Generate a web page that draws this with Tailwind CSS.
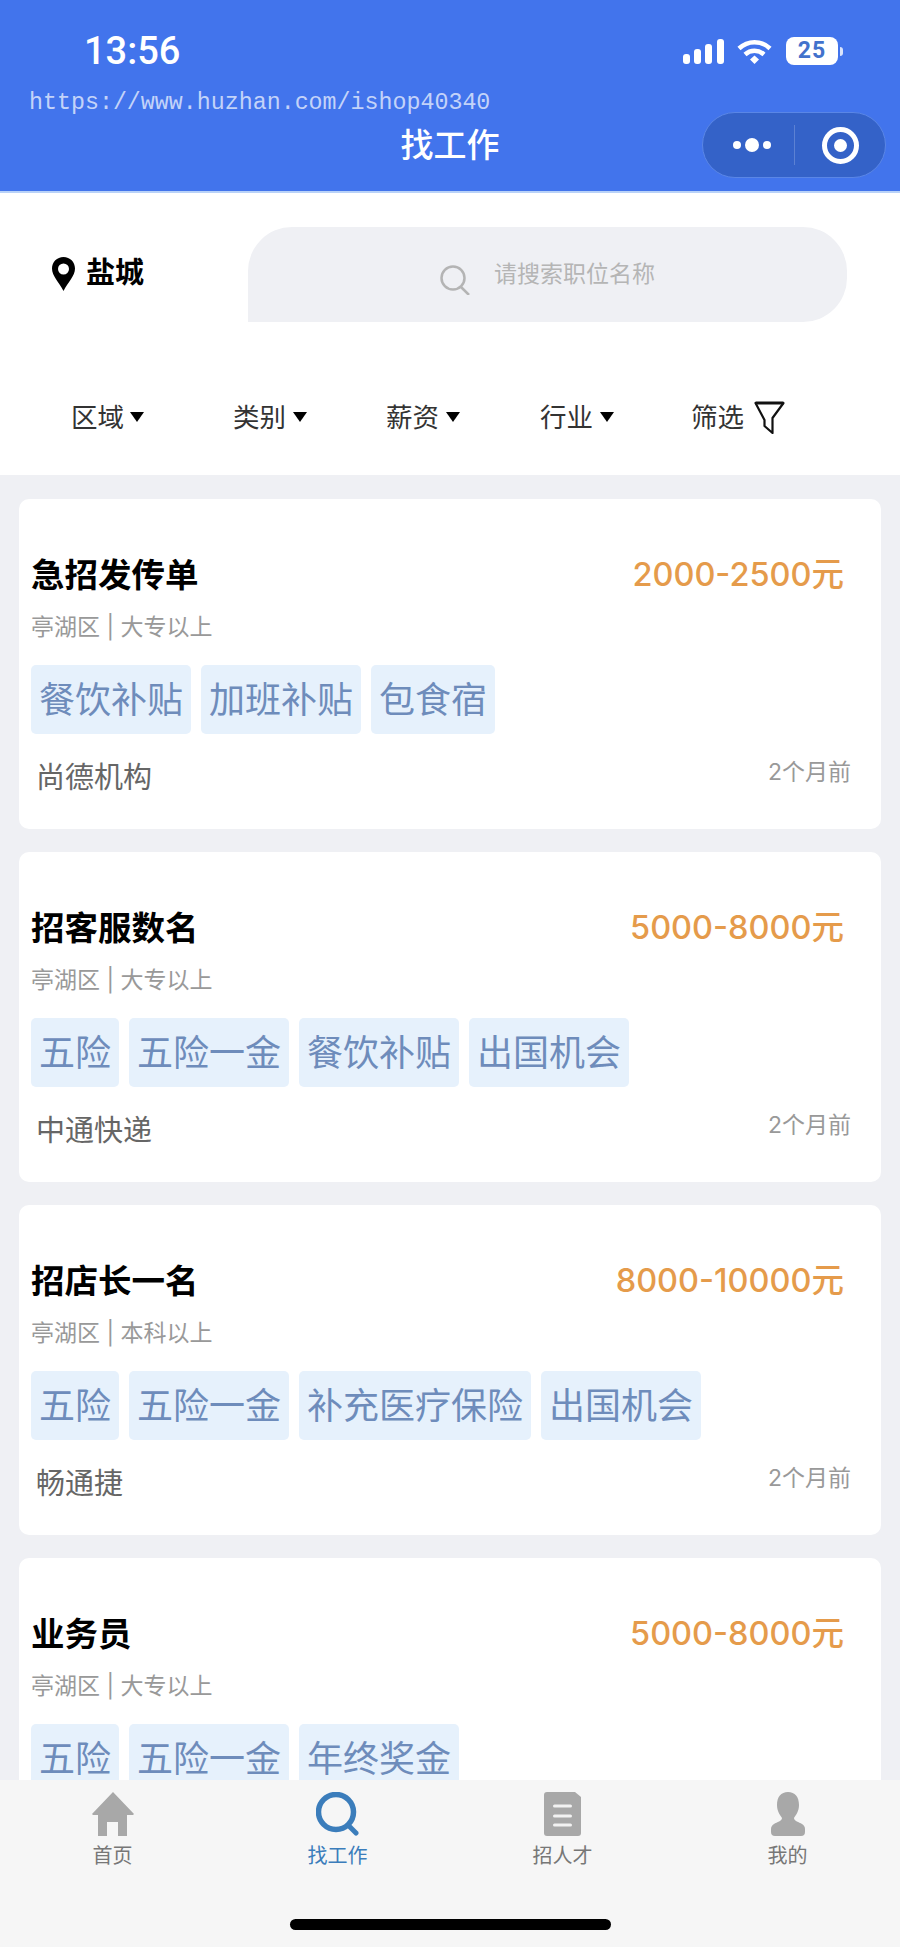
<!DOCTYPE html>
<html lang="zh-CN">
<head>
    <meta charset="UTF-8">
    <meta name="viewport" content="width=device-width, initial-scale=1.0">
    <script src="https://cdn.jsdelivr.net/npm/@tailwindcss/browser@4"></script>
    <title>找工作</title>
</head>
<body class="bg-[#eff0f4] font-['Inter','Noto_Sans_CJK_SC',sans-serif]">
<div class="relative w-[900px] h-[1947px] overflow-hidden flex flex-col">

    <!-- header -->
    <header class="relative h-[193px] shrink-0 bg-[#4274ec] border-b-2 border-[#b9d2f8] text-white">
        <div class="flex items-center justify-between pl-[84px] pr-[57px] pt-[28px]">
            <span class="font-['Roboto'] text-[38px] leading-[46px] font-medium">13:56</span>
            <div class="flex items-center">
                <svg width="41" height="25" viewBox="0 0 41 25" fill="#fff">
                    <rect x="0" y="15" width="7" height="10" rx="3"/>
                    <rect x="11" y="10" width="7" height="15" rx="3"/>
                    <rect x="22" y="5" width="7" height="20" rx="3"/>
                    <rect x="34" y="0" width="7" height="25" rx="3"/>
                </svg>
                <svg class="ml-[13px]" width="35" height="25" viewBox="0 0 35 25" fill="none" stroke="#fff" stroke-width="4.5">
                    <path d="M2 9.500C11 1 24 1 33 9.500"/>
                    <path d="M8 15.500C13.500 10.500 21.500 10.500 27 15.500"/>
                    <path d="M13 20.500L17.500 16.500L22 20.500L17.500 25Z" fill="#fff" stroke="none"/>
                </svg>
                <div class="ml-[14px] w-[52px] h-[28px] rounded-[8px] bg-white text-[#4272cc] font-['Roboto'] font-bold text-[23px] leading-[28px] text-center tracking-[1px]">25</div>
                <div class="ml-[2px] w-[3px] h-[9px] rounded-r-full bg-white/80"></div>
            </div>
        </div>
        <div class="absolute left-[29px] top-[90px] font-['Liberation_Mono'] text-[23.300px] leading-[27px] text-white/70">https://www.huzhan.com/ishop40340</div>
        <h1 class="absolute left-0 right-0 top-[122px] text-center text-[33px] leading-[46px] font-medium">找工作</h1>
        <div class="absolute left-[702px] top-[112px] w-[184px] h-[66px] rounded-full bg-[#3462c8] border border-[#5a86e6] flex items-center">
            <div class="w-[91px] flex justify-center items-center gap-[4px] pl-[6px]">
                <span class="w-[8px] h-[8px] rounded-full bg-white"></span>
                <span class="w-[14px] h-[14px] rounded-full bg-white"></span>
                <span class="w-[8px] h-[8px] rounded-full bg-white"></span>
            </div>
            <div class="w-px h-[40px] bg-white/20"></div>
            <div class="flex-1 flex justify-center">
                <div class="w-[37px] h-[37px] rounded-full border-[5px] border-white flex items-center justify-center">
                    <span class="w-[13px] h-[13px] rounded-full bg-white"></span>
                </div>
            </div>
        </div>
    </header>

    <!-- search + filters -->
    <section class="h-[282px] shrink-0 bg-white pt-[34px]">
        <div class="flex">
            <div class="w-[248px] pl-[52px] pt-[30px] flex items-start">
                <svg width="23" height="34" viewBox="0 0 23 34">
                    <path fill-rule="evenodd" d="M11.500 0C5 0 0 5 0 11.500C0 19 7 25 11.500 34C16 25 23 19 23 11.500C23 5 18 0 11.500 0ZM11.500 6.500A5.500 5.500 0 1 1 11.500 17.500A5.500 5.500 0 1 1 11.500 6.500Z"/>
                </svg>
                <span class="ml-[11px] mt-[1px] text-[29px] leading-[30px] font-bold text-black">盐城</span>
            </div>
            <div class="w-[599px] h-[95px] bg-[#eff0f4] rounded-tl-[44px] rounded-tr-[44px] rounded-br-[44px] flex pl-[192px] pt-[34px]">
                <svg class="mt-[4px]" width="30" height="30" viewBox="0 0 30 30" fill="none" stroke="#b4b4b4" stroke-width="2.500">
                    <circle cx="13" cy="13" r="11.500"/>
                    <path d="M21 22L29 30"/>
                </svg>
                <span class="ml-[24px] text-[23px] leading-[26px] text-[#b5b5b5]">请搜索职位名称</span>
            </div>
        </div>
        <div class="flex items-center mt-[77px] pl-[71px] text-[26.500px] leading-[36px] text-[#333]">
            <span>区域</span>
            <span class="ml-[6px] w-0 h-0 border-x-[7px] border-x-transparent border-t-[10px] border-t-black"></span>
            <span class="ml-[89px]">类别</span>
            <span class="ml-[7px] w-0 h-0 border-x-[7px] border-x-transparent border-t-[10px] border-t-black"></span>
            <span class="ml-[79px]">薪资</span>
            <span class="ml-[7px] w-0 h-0 border-x-[7px] border-x-transparent border-t-[10px] border-t-black"></span>
            <span class="ml-[80px]">行业</span>
            <span class="ml-[7px] w-0 h-0 border-x-[7px] border-x-transparent border-t-[10px] border-t-black"></span>
            <span class="ml-[77px]">筛选</span>
            <svg class="ml-[10px]" width="31" height="33" viewBox="0 0 30 33" fill="none" stroke="#111" stroke-width="2.200" stroke-linejoin="round">
                <path d="M1 2H29L18 17V32L10 25V19Z"/>
                <path d="M1 2H29" stroke-width="3"/>
            </svg>
        </div>
    </section>

    <!-- job list -->
    <main class="flex-1 min-h-0 overflow-hidden px-[19px] pt-[24px] flex flex-col gap-[23px]">

        <article class="h-[330px] shrink-0 rounded-[10px] bg-white pl-[12px] pr-[30px] pt-[56px]">
            <div class="flex justify-between items-center pr-[7px]">
                <h2 class="text-[33.500px] leading-[40px] font-semibold text-black">急招发传单</h2>
                <span class="text-[32.500px] leading-[40px] font-medium text-[#e59b4b]">2000-2500元</span>
            </div>
            <p class="mt-[16px] text-[23px] leading-[32px] text-[#999]">亭湖区 | 大专以上</p>
            <div class="mt-[22px] h-[69px] flex gap-[10px] text-[36px] leading-[71px] text-[#6e8cbb]">
                <span class="px-[8px] rounded-[5px] bg-[#e6f1fc]">餐饮补贴</span>
                <span class="px-[8px] rounded-[5px] bg-[#e6f1fc]">加班补贴</span>
                <span class="px-[8px] rounded-[5px] bg-[#e6f1fc]">包食宿</span>
            </div>
            <div class="mt-[24px] flex justify-between items-start">
                <span class="ml-[5px] text-[29px] leading-[40px] text-[#666]">尚德机构</span>
                <span class="text-[23px] leading-[28px] text-[#999]">2个月前</span>
            </div>
        </article>

        <article class="h-[330px] shrink-0 rounded-[10px] bg-white pl-[12px] pr-[30px] pt-[56px]">
            <div class="flex justify-between items-center pr-[7px]">
                <h2 class="text-[33.500px] leading-[40px] font-semibold text-black">招客服数名</h2>
                <span class="text-[32.500px] leading-[40px] font-medium text-[#e59b4b]">5000-8000元</span>
            </div>
            <p class="mt-[16px] text-[23px] leading-[32px] text-[#999]">亭湖区 | 大专以上</p>
            <div class="mt-[22px] h-[69px] flex gap-[10px] text-[36px] leading-[71px] text-[#6e8cbb]">
                <span class="px-[8px] rounded-[5px] bg-[#e6f1fc]">五险</span>
                <span class="px-[8px] rounded-[5px] bg-[#e6f1fc]">五险一金</span>
                <span class="px-[8px] rounded-[5px] bg-[#e6f1fc]">餐饮补贴</span>
                <span class="px-[8px] rounded-[5px] bg-[#e6f1fc]">出国机会</span>
            </div>
            <div class="mt-[24px] flex justify-between items-start">
                <span class="ml-[5px] text-[29px] leading-[40px] text-[#666]">中通快递</span>
                <span class="text-[23px] leading-[28px] text-[#999]">2个月前</span>
            </div>
        </article>

        <article class="h-[330px] shrink-0 rounded-[10px] bg-white pl-[12px] pr-[30px] pt-[56px]">
            <div class="flex justify-between items-center pr-[7px]">
                <h2 class="text-[33.500px] leading-[40px] font-semibold text-black">招店长一名</h2>
                <span class="text-[32.500px] leading-[40px] font-medium text-[#e59b4b]">8000-10000元</span>
            </div>
            <p class="mt-[16px] text-[23px] leading-[32px] text-[#999]">亭湖区 | 本科以上</p>
            <div class="mt-[22px] h-[69px] flex gap-[10px] text-[36px] leading-[71px] text-[#6e8cbb]">
                <span class="px-[8px] rounded-[5px] bg-[#e6f1fc]">五险</span>
                <span class="px-[8px] rounded-[5px] bg-[#e6f1fc]">五险一金</span>
                <span class="px-[8px] rounded-[5px] bg-[#e6f1fc]">补充医疗保险</span>
                <span class="px-[8px] rounded-[5px] bg-[#e6f1fc]">出国机会</span>
            </div>
            <div class="mt-[24px] flex justify-between items-start">
                <span class="ml-[5px] text-[29px] leading-[40px] text-[#666]">畅通捷</span>
                <span class="text-[23px] leading-[28px] text-[#999]">2个月前</span>
            </div>
        </article>

        <article class="h-[330px] shrink-0 rounded-[10px] bg-white pl-[12px] pr-[30px] pt-[56px]">
            <div class="flex justify-between items-center pr-[7px]">
                <h2 class="text-[33.500px] leading-[40px] font-semibold text-black">业务员</h2>
                <span class="text-[32.500px] leading-[40px] font-medium text-[#e59b4b]">5000-8000元</span>
            </div>
            <p class="mt-[16px] text-[23px] leading-[32px] text-[#999]">亭湖区 | 大专以上</p>
            <div class="mt-[22px] h-[69px] flex gap-[10px] text-[36px] leading-[71px] text-[#6e8cbb]">
                <span class="px-[8px] rounded-[5px] bg-[#e6f1fc]">五险</span>
                <span class="px-[8px] rounded-[5px] bg-[#e6f1fc]">五险一金</span>
                <span class="px-[8px] rounded-[5px] bg-[#e6f1fc]">年终奖金</span>
            </div>
        </article>
    </main>

    <!-- tab bar -->
    <nav class="h-[167px] shrink-0 bg-[#f6f6f6] flex flex-col">
        <div class="grid grid-cols-4 pt-[12px] text-[20px] leading-[24px] text-[#777]">
            <div class="flex flex-col items-center">
                <svg width="42" height="44" viewBox="0 0 42 44" fill="#a8a8a8">
                    <path d="M21 0L42 22L41 23H35V44H26V30H15V44H6V23H1L0 22Z"/>
                </svg>
                <span class="mt-[8px]">首页</span>
            </div>
            <div class="flex flex-col items-center text-[#3b7dbb]">
                <svg width="43" height="44" viewBox="0 0 43 44" fill="none" stroke="#3b7dbb">
                    <circle cx="20" cy="20" r="17.500" stroke-width="5.500"/>
                    <path d="M34 35L40 41" stroke-width="5" stroke-linecap="round"/>
                </svg>
                <span class="mt-[8px]">找工作</span>
            </div>
            <div class="flex flex-col items-center">
                <svg width="37" height="44" viewBox="0 0 37 44">
                    <path fill="#a8a8a8" d="M3 0H31L37 5V41Q37 44 34 44H3Q0 44 0 41V3Q0 0 3 0Z"/>
                    <rect x="9" y="12.500" width="19" height="3" rx="1.500" fill="#f2f2f2"/>
                    <rect x="9" y="22.500" width="19" height="3" rx="1.500" fill="#f2f2f2"/>
                    <rect x="9" y="31.500" width="19" height="3" rx="1.500" fill="#f2f2f2"/>
                </svg>
                <span class="mt-[8px]">招人才</span>
            </div>
            <div class="flex flex-col items-center">
                <svg width="34" height="44" viewBox="0 0 34 44" fill="#a8a8a8">
                    <path d="M17 0C24 0 28 5 28 13C28 19 25 23 23 26C23 29 28 30 31 32C33 33 34 35 34 37V40Q34 44 30 44H4Q0 44 0 40V37C0 35 1 33 3 32C6 30 11 29 11 26C9 23 6 19 6 13C6 5 10 0 17 0Z"/>
                </svg>
                <span class="mt-[8px]">我的</span>
            </div>
        </div>
        <div class="mt-auto mb-[17px] mx-auto w-[321px] h-[11px] rounded-full bg-black"></div>
    </nav>
</div>
</body>
</html>
